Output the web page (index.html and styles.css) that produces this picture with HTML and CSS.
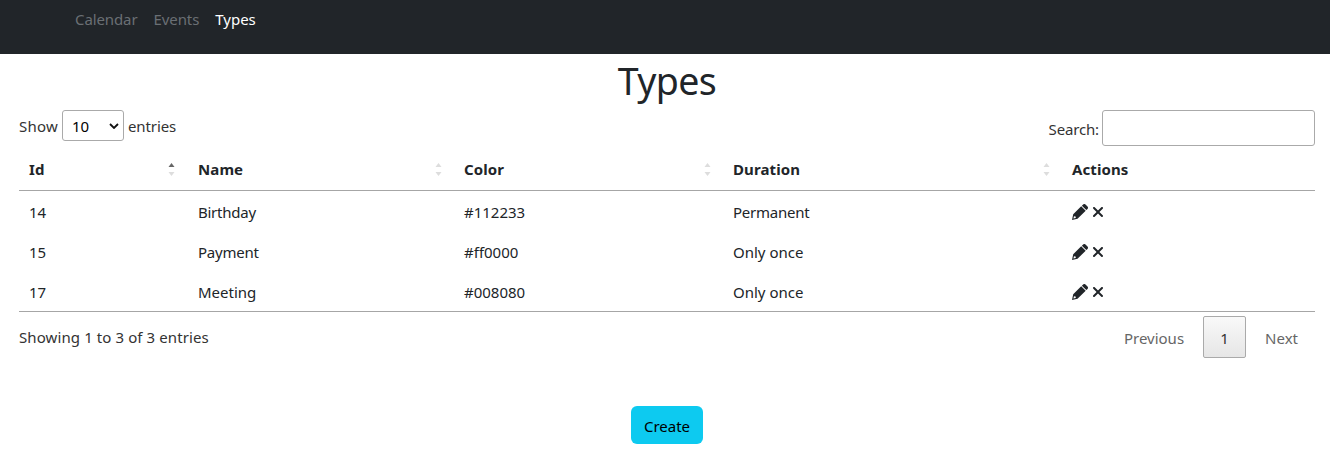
FILE: index.html
```html
<!DOCTYPE html>
<html lang="en">
<head>
<meta charset="utf-8">
<title>Types</title>
<link rel="stylesheet" href="styles.css">
</head>
<body>
<svg class="defs" width="0" height="0">
  <symbol id="pencil" viewBox="0 0 16 16"><path d="M9.200 2.300 13.700 6.800 5.500 14.700 0 16 1.200 10.300zM2 12.200 1.400 14.600 3.800 14 3.600 12.400z" fill-rule="evenodd"/><path d="M9.900 1.700 11.100.5c.7-.7 1.700-.7 2.400 0l2 2c.7.7.7 1.700 0 2.400l-1.200 1.200z"/></symbol>
  <symbol id="xmark" viewBox="0 0 320 512"><path d="M310.600 150.600c12.500-12.500 12.500-32.800 0-45.300s-32.800-12.500-45.300 0L160 210.700 54.600 105.400c-12.500-12.500-32.800-12.500-45.300 0s-12.500 32.800 0 45.300L114.700 256 9.400 361.400c-12.500 12.500-12.500 32.800 0 45.300s32.800 12.500 45.300 0L160 301.300l105.400 105.300c12.500 12.500 32.800 12.500 45.300 0s12.500-32.800 0-45.300L205.300 256l105.300-105.400z"/></symbol>
  <symbol id="sort" viewBox="0 0 7 15"><path class="up" d="M.5 5 3.500 1l3 4z"/><path class="down" d="M.5 10h6l-3 4z"/></symbol>
</svg>
<nav class="navbar">
  <a class="nav-link calendar">Calendar</a>
  <a class="nav-link events">Events</a>
  <a class="nav-link active">Types</a>
</nav>
<main class="page">
  <h1 class="title">Types</h1>
  <div class="controls">
    <div class="length"><span class="show">Show</span>
      <span class="select"><span>10</span><svg width="10" height="6" viewBox="0 0 10 6"><path d="M1 1l4 4 4-4"/></svg></span>
      <span class="entries">entries</span></div>
    <label class="search"><span class="search-label">Search:</span><input class="search-input" type="text"></label>
  </div>
  <div class="table">
    <div class="row head">
      <div class="cell">Id<svg class="sort asc"><use href="#sort"/></svg></div>
      <div class="cell">Name<svg class="sort"><use href="#sort"/></svg></div>
      <div class="cell">Color<svg class="sort"><use href="#sort"/></svg></div>
      <div class="cell">Duration<svg class="sort"><use href="#sort"/></svg></div>
      <div class="cell">Actions</div>
    </div>
    <div class="row"><div class="cell">14</div><div class="cell name">Birthday</div><div class="cell">#112233</div><div class="cell permanent">Permanent</div><div class="cell"><svg class="pencil"><use href="#pencil"/></svg><svg class="xmark"><use href="#xmark"/></svg></div></div>
    <div class="row"><div class="cell">15</div><div class="cell name">Payment</div><div class="cell">#ff0000</div><div class="cell">Only once</div><div class="cell"><svg class="pencil"><use href="#pencil"/></svg><svg class="xmark"><use href="#xmark"/></svg></div></div>
    <div class="row"><div class="cell">17</div><div class="cell">Meeting</div><div class="cell">#008080</div><div class="cell">Only once</div><div class="cell"><svg class="pencil"><use href="#pencil"/></svg><svg class="xmark"><use href="#xmark"/></svg></div></div>
  </div>
  <div class="footer">
    <div class="info">Showing 1 to 3 of 3 entries</div>
    <div class="pager"><a class="previous">Previous</a><a class="current">1</a><a class="next">Next</a></div>
  </div>
  <button class="create">Create</button>
</main>
</body>
</html>
```
FILE: styles.css
```css
* { box-sizing: border-box; }
body { margin: 0; background: #fff; color: #212529; font: 15px/24px "Noto Sans", "Open Sans", sans-serif; }
.defs { display: block; height: 0; }
.navbar { display: flex; gap: 16px; height: 54px; padding: 7px 0 0 75px; background: #212529; }
.nav-link { color: #6a6f74; }
.calendar, .events { letter-spacing: -0.1px; }
.nav-link.active { color: #fff; }
.page { display: flex; flex-direction: column; padding: 0 15px 0 19px; }
.title { margin: 3px 0 5px; font-size: 37.5px; line-height: 48px; font-weight: 400; letter-spacing: -0.6px; text-align: center; }
.controls { display: flex; justify-content: space-between; height: 40px; color: #333; }
.length { display: flex; gap: 4px; height: 31px; align-items: center; }
.show { width: 39px; letter-spacing: 0.2px; }
.select { display: flex; align-items: center; justify-content: space-between; width: 62px; height: 31px; padding: 0 4px 0 9px; border: 1px solid #aaa; border-radius: 3px; color: #000; }
.entries { letter-spacing: -0.1px; }
.select path { fill: none; stroke: #111; stroke-width: 1.8; }
.search { display: flex; height: 36px; align-items: center; gap: 3px; }
.search-label { padding-top: 2px; letter-spacing: -0.15px; }
.search-input { width: 213px; height: 36px; border: 1px solid #aaa; border-radius: 3px; background: transparent; }
.table { border-bottom: 1px solid #a6a6a6; }
.row { display: grid; grid-template-columns: 169px 266px 269px 339px 253px; height: 40px; }
.cell { display: flex; align-items: center; padding: 2px 10px 0; }
.name, .permanent { letter-spacing: -0.25px; }
.head { height: 41px; border-bottom: 1px solid #a6a6a6; font-weight: 700; letter-spacing: 0.1px; }
.head .cell { justify-content: space-between; padding: 0 9px 2px 10px; }
.head .cell:first-child { padding-right: 10px; }
.sort { --up: #ddd; width: 7px; height: 15px; margin-right: 3px; }
.asc { --up: #666; }
.up { fill: var(--up); }
.down { fill: #ddd; }
.pencil { width: 16px; height: 16px; }
.xmark { width: 10px; height: 16px; margin-left: 5px; }
.pencil, .xmark { fill: #212529; }
.footer { display: flex; justify-content: space-between; height: 94px; color: #333; }
.info { padding-top: 13px; letter-spacing: 0.1px; }
.pager { display: flex; gap: 2px; padding-top: 4px; line-height: 45px; color: #666; }
.previous, .next { padding: 0 17px; }
.current { width: 43px; height: 42px; border: 1px solid #aaa; border-radius: 2px; background: linear-gradient(#f9f9f9, #e6e6e6); color: #333; line-height: 43px; text-align: center; }
.create { align-self: center; width: 72px; height: 38px; padding: 2px 0 0; border: 0; border-radius: 6px; background: #0dcaf0; color: #000; font: inherit; }
```
